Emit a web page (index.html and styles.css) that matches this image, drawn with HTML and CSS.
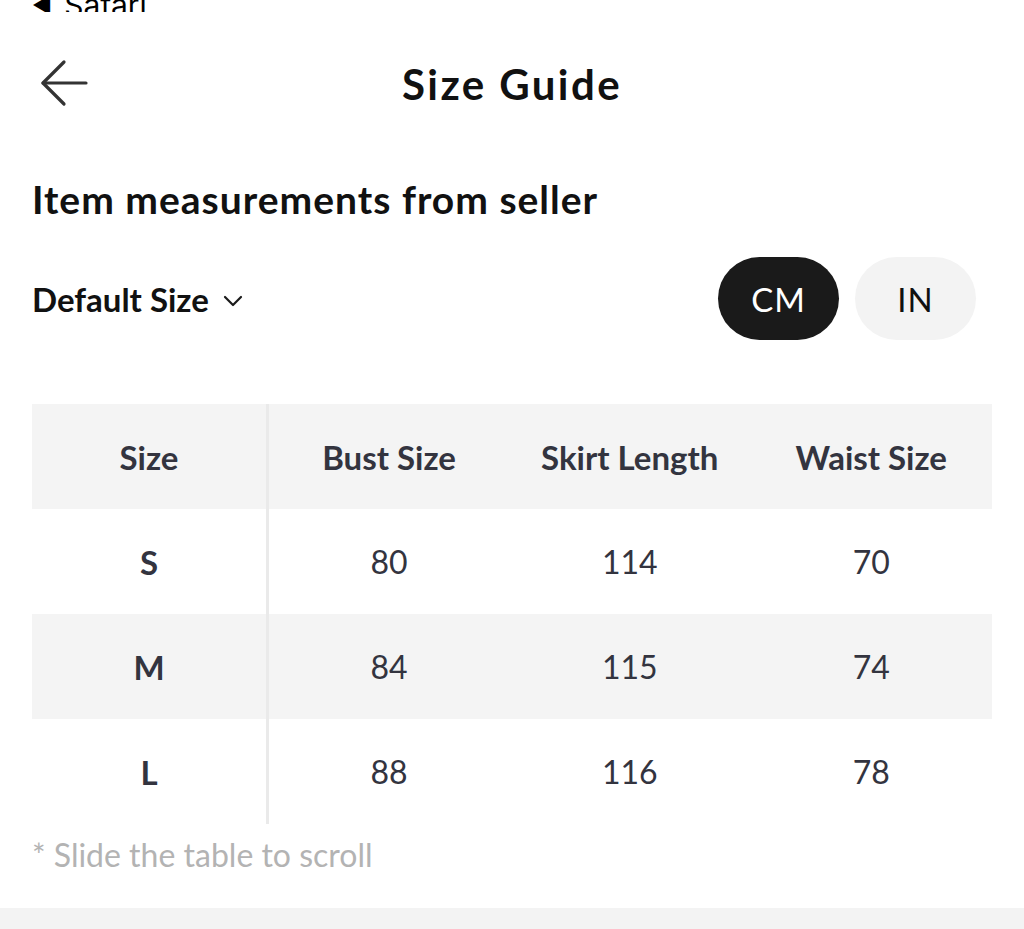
FILE: index.html
```html
<!DOCTYPE html>
<html lang="en">
<head>
  <meta charset="UTF-8">
  <meta name="viewport" content="width=device-width, initial-scale=1.0">
  <title>Size Guide</title>
  <link rel="stylesheet" href="styles.css">
</head>
<body>
  <!-- status bar, mostly scrolled off the top -->
  <div class="status">
    <span class="status-back">&#9664;</span>
    <span>Safari</span>
  </div>

  <header class="topbar">
    <button class="back" aria-label="Back">
      <svg width="48" height="48" viewBox="0 0 48 48" fill="none" stroke="#333" stroke-width="3.2" stroke-linecap="round" stroke-linejoin="round">
        <path d="M46 24H3"/>
        <path d="M24 3L3 24l21 21"/>
      </svg>
    </button>
    <h1>Size Guide</h1>
  </header>

  <main class="content">
    <h2 class="section-title">Item measurements from seller</h2>

    <div class="controls">
      <div class="size-select">
        Default Size
        <svg width="20" height="12" viewBox="0 0 20 12" fill="none" stroke="#1a1a1a" stroke-width="2.2" stroke-linecap="round" stroke-linejoin="round">
          <path d="M2 2l8 8 8-8"/>
        </svg>
      </div>
      <div class="units">
        <button class="unit active">CM</button>
        <button class="unit">IN</button>
      </div>
    </div>

    <table class="size-table">
      <thead>
        <tr>
          <th class="first">Size</th>
          <th>Bust Size</th>
          <th>Skirt Length</th>
          <th>Waist Size</th>
        </tr>
      </thead>
      <tbody>
        <tr>
          <th class="first">S</th>
          <td>80</td>
          <td>114</td>
          <td>70</td>
        </tr>
        <tr class="alt">
          <th class="first">M</th>
          <td>84</td>
          <td>115</td>
          <td>74</td>
        </tr>
        <tr>
          <th class="first">L</th>
          <td>88</td>
          <td>116</td>
          <td>78</td>
        </tr>
      </tbody>
    </table>

    <p class="hint">* Slide the table to scroll</p>
  </main>

  <div class="footer-bar"></div>
</body>
</html>
```

FILE: styles.css
```css
body {
  margin: 0;
  font-family: 'Lato', 'Noto Sans', sans-serif;
  background: #fff;
  color: #1a1a1a;
}
.status {
  height: 12px;
  overflow: hidden;
  display: flex;
  align-items: flex-end;
  gap: 12px;
  padding-left: 32px;
  font-family: 'Inter', 'Roboto', sans-serif;
  font-size: 30px;
  line-height: 30px;
  color: #000;
}
.status span {
  display: block;
  margin-bottom: -8px;
}
.status-back {
  font-size: 22px;
}
.topbar {
  display: flex;
  align-items: center;
  justify-content: center;
  position: relative;
  height: 144px;
}
.back {
  position: absolute;
  left: 40px;
  top: 47px;
  border: none;
  background: none;
  padding: 0;
}
.topbar h1 {
  margin: 0;
  font-size: 42px;
  font-weight: 700;
  letter-spacing: 2.4px;
  color: #111;
}
.content {
  padding: 0 32px;
}
.section-title {
  margin: 19px 0 0;
  font-size: 39px;
  font-weight: 700;
  line-height: 48px;
  letter-spacing: 1px;
  color: #111;
}
.controls {
  display: flex;
  justify-content: space-between;
  align-items: center;
  margin-top: 34px;
}
.size-select {
  display: flex;
  align-items: center;
  gap: 14px;
  font-size: 33px;
  font-weight: 700;
  color: #111;
}
.size-select svg {
  margin-top: 4px;
}
.units {
  display: flex;
  gap: 16px;
  margin-right: 16px;
}
.unit {
  width: 121px;
  height: 83px;
  border: none;
  border-radius: 42px;
  background: #f3f3f3;
  color: #111;
  font-family: 'Lato', sans-serif;
  font-size: 33px;
  letter-spacing: 1px;
}
.unit.active {
  background: #1a1a1a;
  color: #fff;
}
.size-table {
  margin-top: 64px;
  width: 960px;
  border-collapse: collapse;
  table-layout: fixed;
  color: #33343f;
}
.size-table th,
.size-table td {
  height: 105px;
  padding: 0;
  text-align: center;
  font-size: 32px;
}
.size-table th {
  font-size: 33px;
  font-weight: 700;
}
.size-table td {
  font-weight: 400;
}
.size-table .first {
  width: 234px;
  border-right: 3px solid #eaeaea;
}
.size-table thead tr,
.size-table tr.alt {
  background: #f4f4f4;
}
.hint {
  margin: 11px 0 0;
  font-size: 32px;
  line-height: 40px;
  color: #b3b3b3;
}
.footer-bar {
  margin-top: 33px;
  height: 30px;
  background: #f3f3f3;
}
```
